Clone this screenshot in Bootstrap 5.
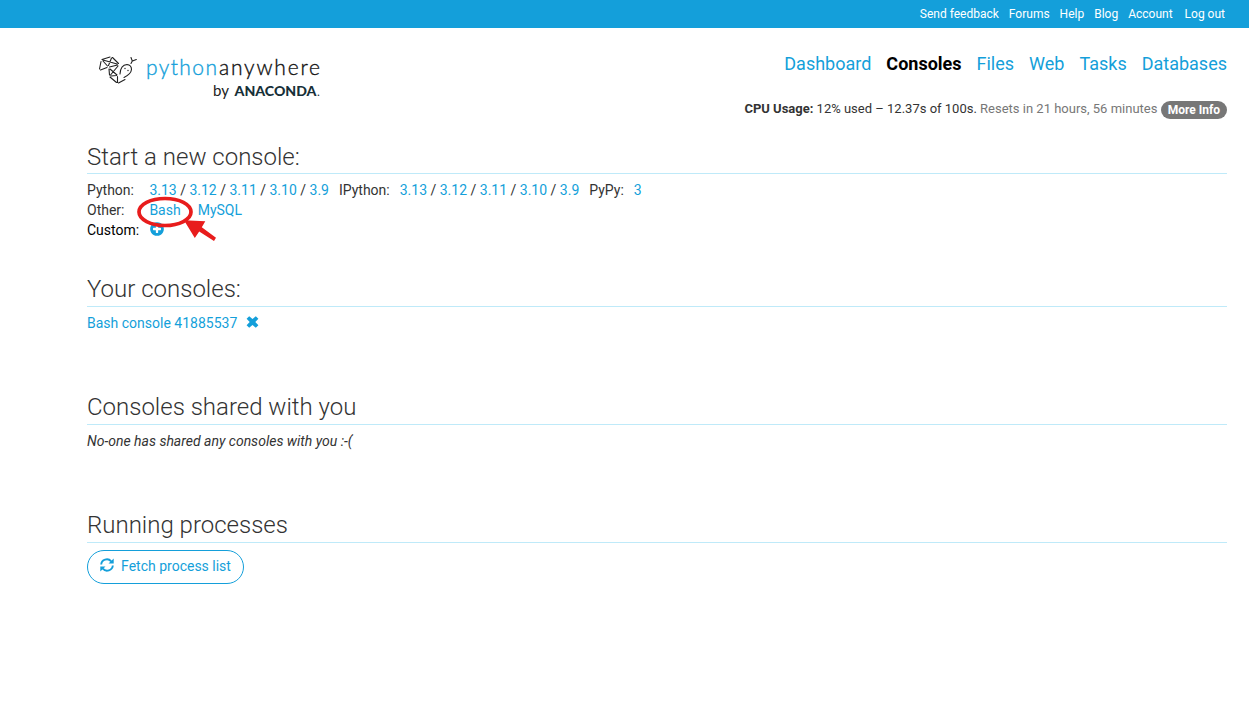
<!DOCTYPE html>
<html lang="en">
<head>
<meta charset="utf-8">
<meta name="viewport" content="width=device-width, initial-scale=1">
<title>Consoles : PythonAnywhere</title>
<link rel="stylesheet" href="https://cdn.jsdelivr.net/npm/bootstrap@5.3.0/dist/css/bootstrap.min.css">
<style>
body{font-family:Roboto,sans-serif;font-size:14px;line-height:20px;color:#333;background:#fff}
a{color:#149fda;text-decoration:none}
.topbar{background:#149fda;height:28px;font-size:12px;padding-right:24px}
.topbar a{color:#fff}
.page{padding-left:87px;padding-right:22px}
.masthead{height:109px}
.mainnav{font-size:18px;gap:15px;padding-top:26px}
.mainnav a.active{color:#000;font-weight:700}
.cpu{font-size:13px;margin-top:25px}
.info-pill{background:#777;color:#fff;font-size:12px;font-weight:700;line-height:12px;padding:3px 7px;border-radius:9px;display:inline-block;vertical-align:-1px}
h2{font-size:24px;font-weight:300;line-height:39px;height:37px;margin:0;border-bottom:1px solid #bfeaf9}
.first h2{line-height:41px}
.lbl{width:62.4px}
.marker{left:45px;top:56px;pointer-events:none}
.fetch{color:#149fda;border:1px solid #149fda;border-radius:17px;height:34px;width:157px;font-size:14px;padding:0 0 2px}
</style>
</head>
<body>
<nav class="topbar d-flex justify-content-end align-items-center">
<a href="#" style="margin-right:10px">Send feedback</a><a href="#" style="margin-right:10px">Forums</a><a href="#" style="margin-right:10px">Help</a><a href="#" style="margin-right:10px">Blog</a><a href="#" style="margin-right:12px">Account</a><a href="#">Log out</a>
</nav>
<div class="page">
<header class="masthead d-flex justify-content-between">
<a href="#" class="d-block"><svg width="245" height="80" viewBox="87 28 245 80" fill="none">
<g stroke="#222" stroke-width="1.1" stroke-linecap="round"><path d="M102 59.500L110 57M101 61.500L99.500 69M103 61L107.500 66M100.500 70L107 67.500M111.500 58L108.500 65.500M112.500 57.500L118.500 63.500M103 60L117 64M109.500 67L117.500 65M109 69L109.500 75M118 66L110.500 75M111 76L116.500 75.500M110 77L116.500 82.500M117.500 76.500V82.500M118.500 83L125 79.500M110 69L117 75M120 74Q120.500 65 127 64.500Q131.500 65 131.500 69.500Q131 74 124 77.500M131 63.500L132.300 61L131 57.500M132.500 61L136.300 59.500"/></g>
<circle cx="125" cy="68.500" r=".7" fill="#222"/><circle cx="128" cy="70.500" r=".7" fill="#222"/>
<text x="146" y="74.500" font-family="Lato" font-weight="300" font-size="21" textLength="71" fill="#149fda" stroke="#149fda" stroke-width=".35">python</text><text x="219" y="74.500" font-family="Lato" font-weight="300" font-size="21" textLength="101" fill="#111" stroke="#111" stroke-width=".35">anywhere</text>
<text x="213" y="96" font-family="Lato" font-size="14.500" textLength="16" lengthAdjust="spacingAndGlyphs" fill="#222">by</text><text x="234.500" y="96" font-family="Lato" font-weight="900" font-size="14" textLength="82" lengthAdjust="spacingAndGlyphs" fill="#173039">ANACONDA</text><text x="317" y="96" font-family="Lato" font-size="12" fill="#173039">.</text></svg></a>
<div class="d-flex flex-column align-items-end">
<nav class="mainnav d-flex"><a href="#">Dashboard</a><a href="#" class="active">Consoles</a><a href="#">Files</a><a href="#">Web</a><a href="#">Tasks</a><a href="#">Databases</a></nav>
<div class="cpu"><b>CPU Usage:</b> 12% used – 12.37s of 100s. <span style="color:#777">Resets in 21 hours, 56 minutes</span> <a href="#" class="info-pill">More Info</a></div>
</div>
</header>
<section class="first position-relative" style="height:133px">
<h2>Start a new console:</h2>
<div style="padding-top:6px">
<div class="d-flex"><span class="lbl">Python:</span><span><a href="#">3.13</a> / <a href="#">3.12</a> / <a href="#">3.11</a> / <a href="#">3.10</a> / <a href="#">3.9</a></span><span style="margin:0 10px">IPython:</span><span><a href="#">3.13</a> / <a href="#">3.12</a> / <a href="#">3.11</a> / <a href="#">3.10</a> / <a href="#">3.9</a></span><span style="margin:0 10px">PyPy:</span><a href="#">3</a></div>
<div class="d-flex"><span class="lbl">Other:</span><a href="#">Bash</a><a href="#" style="margin-left:17px">MySQL</a></div>
<div class="d-flex"><span class="lbl" style="color:#000">Custom:</span><a href="#"><svg class="d-block" width="16" height="16" viewBox="0 0 1792 1792" fill="currentColor" style="margin:1px 0 0 -.4px"><path d="M1344 960v-128q0-26-19-45t-45-19h-256v-256q0-26-19-45t-45-19h-128q-26 0-45 19t-19 45v256h-256q-26 0-45 19t-19 45v128q0 26 19 45t45 19h256v256q0 26 19 45t45 19h128q26 0 45-19t19-45v-256h256q26 0 45-19t19-45zm320-64q0 209-103 385.500t-279.500 279.500-385.500 103-385.500-103-279.500-279.500-103-385.500 103-385.500 279.500-279.500 385.500-103 385.500 103 279.500 279.500 103 385.500z"/></svg></a></div>
</div>
<svg class="marker position-absolute" width="90" height="52" viewBox="132 193 90 52"><ellipse cx="165" cy="212" rx="26" ry="13.500" fill="none" stroke="#e81c1c" stroke-width="3.700"/><path d="M184 220.300L205.300 221.300L201.800 227.300L216 237.700L214 241L199.200 231.500L194.800 238Z" fill="#e81c1c"/></svg>
</section>
<section style="height:118px">
<h2>Your consoles:</h2>
<div class="d-flex" style="padding-top:6px"><a href="#">Bash console 41885537</a><a href="#" style="margin-left:8.400px"><svg class="d-block" width="13" height="12" viewBox="0 0 13 12" fill="currentColor" style="margin-top:3px"><path d="M3.200 .3L6.500 3L9.800 .3L12.400 2.700L9.300 6L12.400 9.300L9.800 11.700L6.500 9L3.200 11.700L.6 9.300L3.700 6L.6 2.700Z"/></svg></a></div>
</section>
<section style="height:118px">
<h2>Consoles shared with you</h2>
<p class="fst-italic m-0" style="padding-top:6px">No-one has shared any consoles with you :-(</p>
</section>
<section>
<h2>Running processes</h2>
<button class="fetch btn d-flex align-items-center justify-content-center" style="margin-top:7px"><svg width="14" height="14" viewBox="0 0 14 14" fill="none" style="margin:-2px 7px 0 0"><path d="M1.200 6.500A5.700 5.500 0 0 1 11.200 3.300M12.800 7.500A5.700 5.500 0 0 1 2.800 10.700" stroke="currentColor" stroke-width="1.900"/><path d="M13.700 .4V5.500H8.500ZM.3 13.600V8.500H5.500Z" fill="currentColor"/></svg>Fetch process list</button>
</section>
</div>
<script src="https://cdn.jsdelivr.net/npm/bootstrap@5.3.0/dist/js/bootstrap.bundle.min.js"></script>
</body>
</html>
